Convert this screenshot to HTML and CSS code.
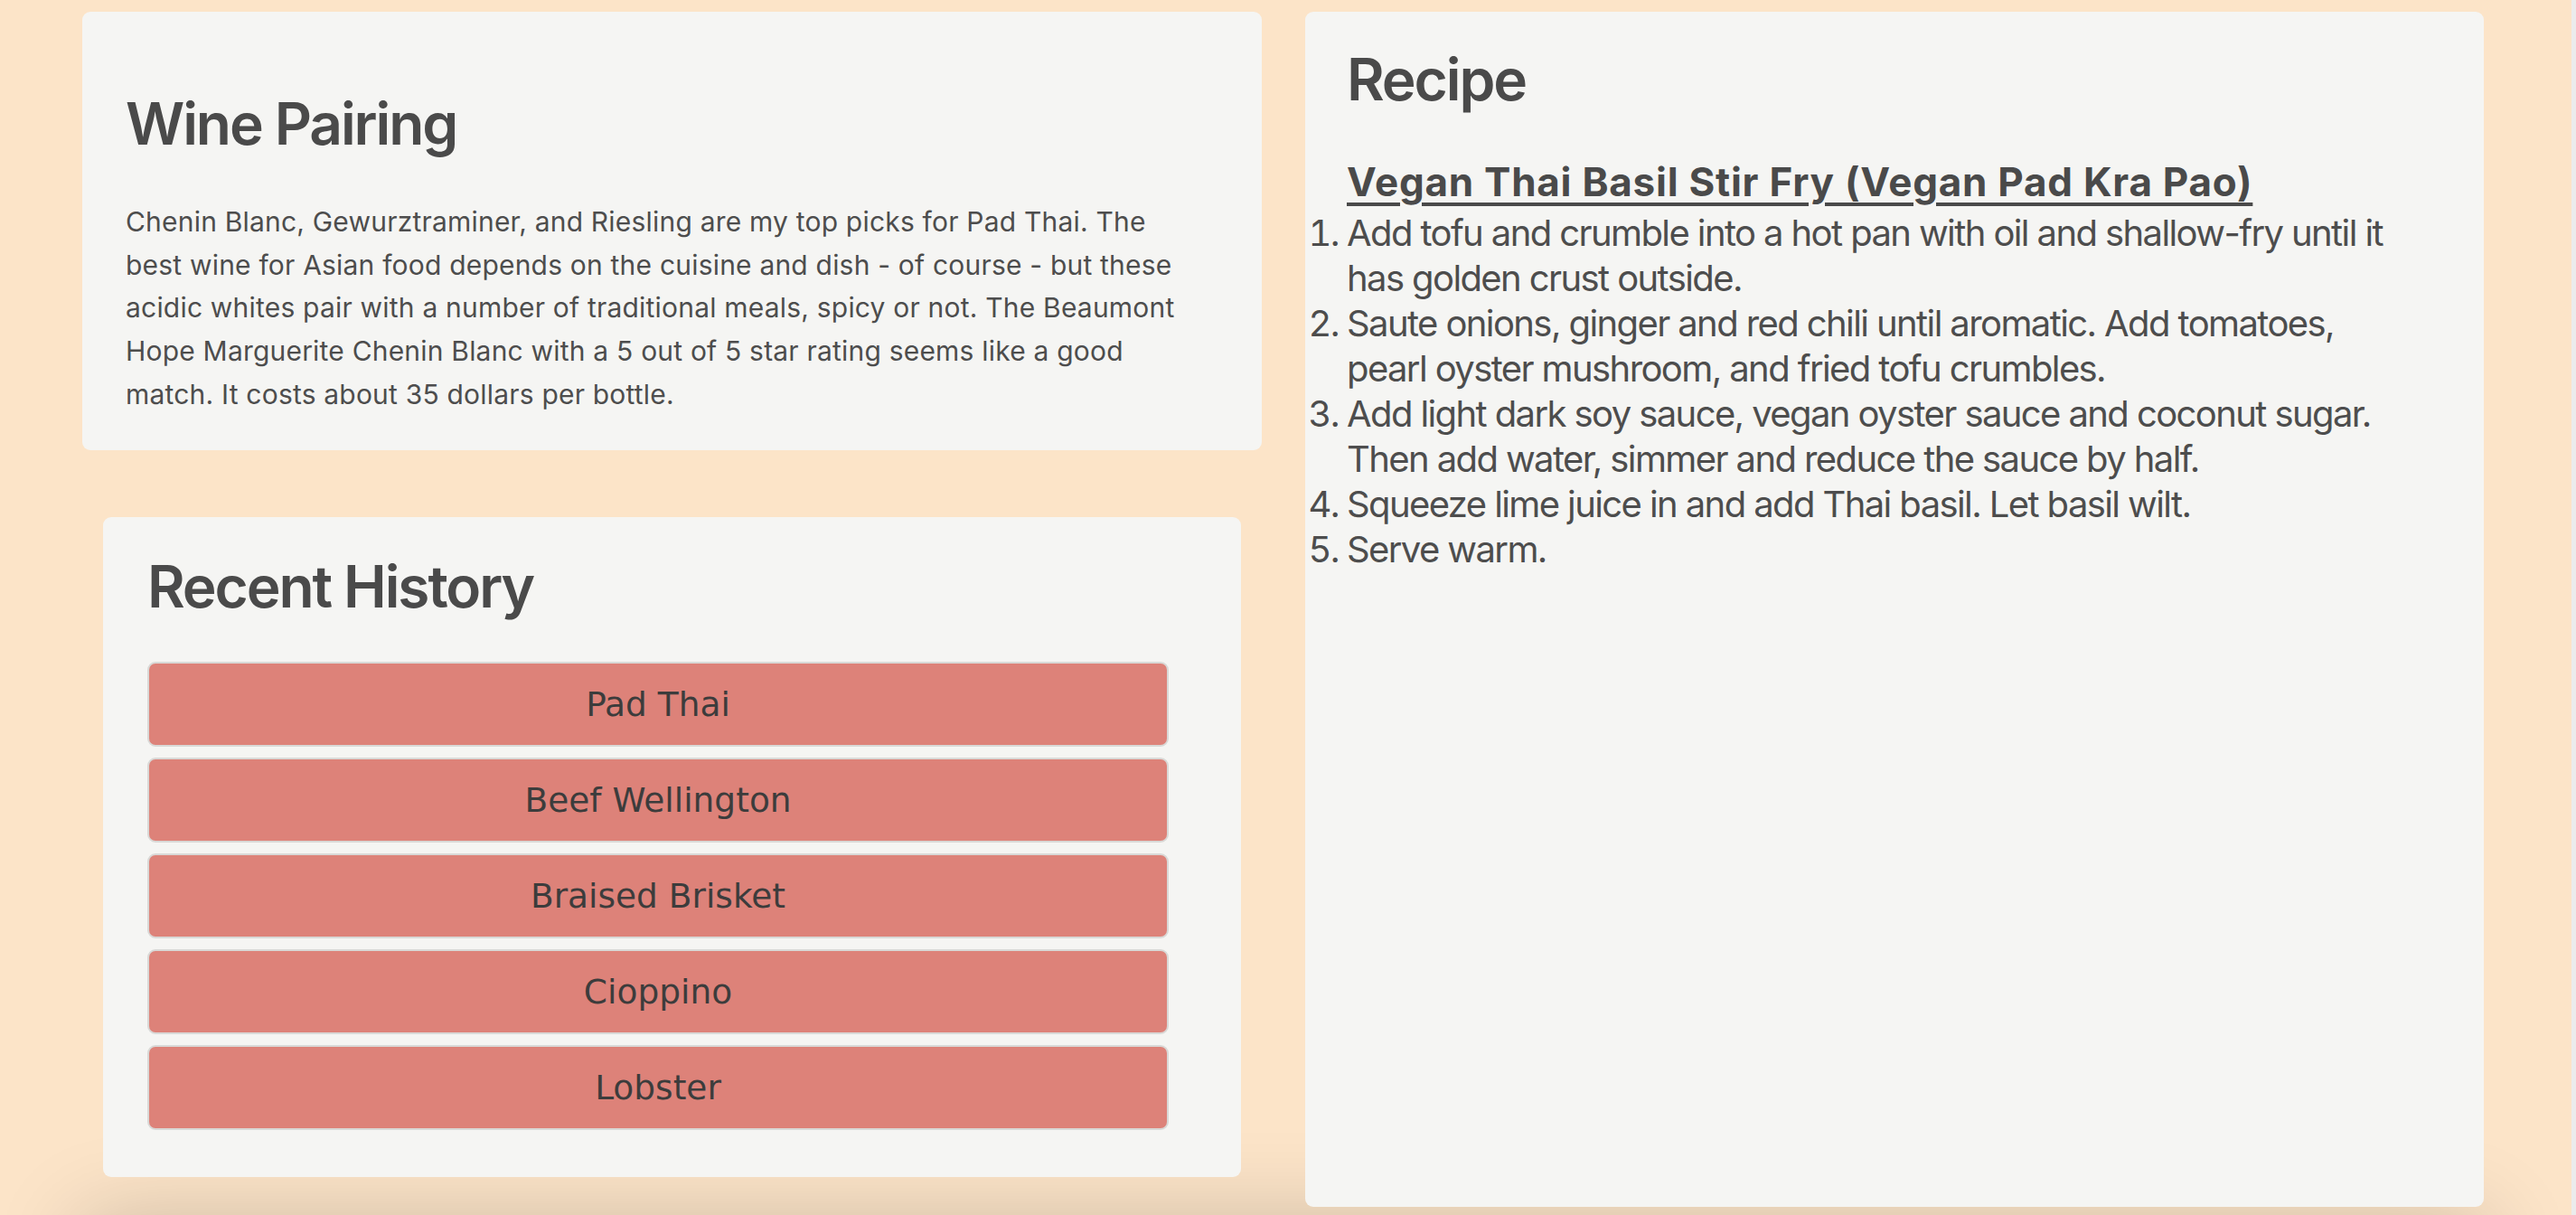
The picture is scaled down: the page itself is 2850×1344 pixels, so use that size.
FILE: index.html
```html
<!DOCTYPE html>
<html lang="en">
<head>
<meta charset="utf-8">
<title>Pad Thai</title>
<link rel="stylesheet" href="styles.css">
</head>
<body>
<div class="page">
  <div class="left-col">
    <section class="card wine">
      <h1 class="card-title">Wine Pairing</h1>
      <p class="wine-text">Chenin Blanc, Gewurztraminer, and Riesling are my top picks for Pad Thai. The best wine for Asian food depends on the cuisine and dish - of course - but these acidic whites pair with a number of traditional meals, spicy or not. The Beaumont Hope Marguerite Chenin Blanc with a 5 out of 5 star rating seems like a good match. It costs about 35 dollars per bottle.</p>
    </section>
    <section class="card history">
      <h1 class="card-title">Recent History</h1>
      <div class="history-list">
        <button class="history-btn">Pad Thai</button>
        <button class="history-btn">Beef Wellington</button>
        <button class="history-btn">Braised Brisket</button>
        <button class="history-btn">Cioppino</button>
        <button class="history-btn">Lobster</button>
      </div>
    </section>
  </div>
  <section class="card recipe">
    <h1 class="card-title">Recipe</h1>
    <h2 class="recipe-name">Vegan Thai Basil Stir Fry (Vegan Pad Kra Pao)</h2>
    <ol class="steps">
      <li>Add tofu and crumble into a hot pan with oil and shallow-fry until it has golden crust outside.</li>
      <li>Saute onions, ginger and red chili until aromatic. Add tomatoes, pearl oyster mushroom, and fried tofu crumbles.</li>
      <li>Add light dark soy sauce, vegan oyster sauce and coconut sugar. Then add water, simmer and reduce the sauce by half.</li>
      <li>Squeeze lime juice in and add Thai basil. Let basil wilt.</li>
      <li>Serve warm.</li>
    </ol>
  </section>
</div>
<div class="footer-shade"></div>
</body>
</html>
```

FILE: styles.css
```css
html {
  background: #fce4c8;
  overflow: hidden;
}

body {
  margin: 0;
  background: #fce4c8;
  font-family: Inter, "Noto Sans", sans-serif;
  color: #4a4a4a;
}

body::after {
  content: "";
  position: fixed;
  top: 0;
  right: 0;
  bottom: 0;
  width: 5px;
  background: #ececec;
}

.page {
  display: flex;
  align-items: flex-start;
  gap: 48px;
  padding: 13px 0 0 91px;
}

.left-col {
  width: 1305px;
  display: flex;
  flex-direction: column;
}

.card {
  background: #f5f5f3;
  border-radius: 9px;
  box-sizing: border-box;
}

.card-title {
  font-size: 64px;
  line-height: 76.8px;
  font-weight: 600;
  letter-spacing: -2.1px;
  margin: 0;
  color: #4a4a4a;
}

.wine {
  padding: 86px 72px 38px 48px;
  height: 485px;
}

.wine-text {
  margin: 46px 0 0 0;
  font-size: 30px;
  line-height: 47.8px;
  letter-spacing: 0.2px;
  color: #4d4d4d;
}

.history {
  margin: 74px 23px 0 23px;
  padding: 39px 80px 52px 49px;
  height: 730px;
}

.history-list {
  margin-top: 44px;
  display: flex;
  flex-direction: column;
  gap: 12px;
}

.history-btn {
  height: 94px;
  background: #dd8279;
  border: 2px solid #d9d9d7;
  border-radius: 9px;
  font-family: "DejaVu Sans", Verdana, sans-serif;
  font-size: 37.5px;
  color: #3c3c3c;
  padding: 0;
  text-align: center;
}

.recipe {
  width: 1304px;
  height: 1322px;
  padding: 37px 83px 0 46px;
}

.recipe-name {
  margin: 48px 0 0 0;
  font-size: 44px;
  line-height: 53px;
  font-weight: 700;
  letter-spacing: 0.75px;
  text-decoration: underline;
  text-decoration-thickness: 4px;
  text-underline-offset: 7px;
  color: #4a4a4a;
}

.steps {
  margin: 5px 0 0 0;
  padding: 0;
  font-size: 40px;
  line-height: 50px;
  letter-spacing: -1.6px;
  color: #4d4d4d;
}

.footer-shade {
  margin: 15px 100px 0 90px;
  height: 200px;
  box-shadow: 0 0 100px rgba(0, 0, 0, 0.2);
  background: #fce4c8;
}
```
